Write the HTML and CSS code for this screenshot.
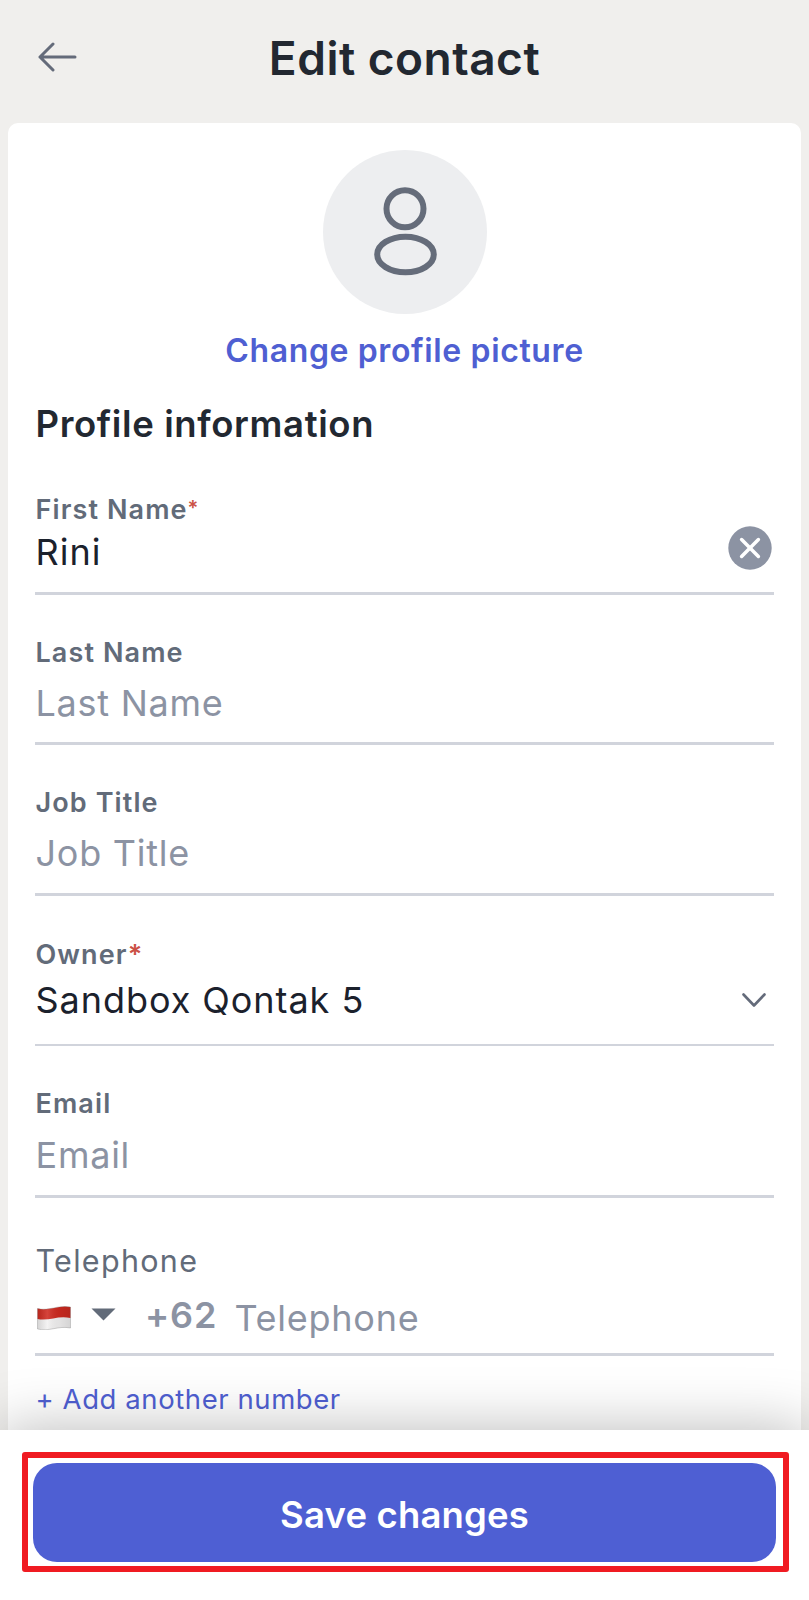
FILE: index.html
```html
<!DOCTYPE html>
<html lang="en">
<head>
<meta charset="utf-8">
<title>Edit contact</title>
<link rel="stylesheet" href="styles.css">
</head>
<body>
<div class="screen">
  <header class="topbar">
    <svg class="back" width="40" height="32" viewBox="0 0 40 32"><path d="M37 16H2M15 3L2 16l13 13"/></svg>
    <h1 class="title">Edit contact</h1>
  </header>
  <main class="card">
    <div class="avatar">
      <svg width="164" height="164" viewBox="0 0 164 164"><circle cx="82" cy="58.700" r="18.500"/><ellipse cx="82.500" cy="104.500" rx="28.300" ry="17.800"/></svg>
    </div>
    <a class="change"><span>Change profile picture</span></a>
    <h2 class="section"><span>Profile information</span></h2>

    <div class="field first">
      <div class="label"><span>First Name</span><span class="req small">*</span></div>
      <div class="value"><span>Rini</span></div>
      <svg class="clear" width="44" height="44" viewBox="0 0 44 44"><circle cx="22" cy="22" r="21.700"/><path d="M13.600 13.600l16.800 16.800M30.400 13.600L13.600 30.400"/></svg>
    </div>
    <div class="field last">
      <div class="label"><span>Last Name</span></div>
      <div class="value hint"><span>Last Name</span></div>
    </div>
    <div class="field job">
      <div class="label"><span>Job Title</span></div>
      <div class="value hint"><span>Job Title</span></div>
    </div>
    <div class="field owner">
      <div class="label"><span>Owner</span><span class="req">*</span></div>
      <div class="value"><span>Sandbox Qontak 5</span>
        <svg class="chevron" width="26" height="16" viewBox="0 0 26 16"><path d="M2.500 2.500L13 13.500 23.500 2.500"/></svg>
      </div>
    </div>
    <div class="field email">
      <div class="label"><span>Email</span></div>
      <div class="value hint"><span>Email</span></div>
    </div>
    <div class="field phone">
      <div class="label plain"><span>Telephone</span></div>
      <div class="value hint">
        <svg class="flag" width="34" height="24" viewBox="0 0 34 24">
          <defs><linearGradient id="wave"><stop offset="0" stop-color="#000" stop-opacity=".12"/><stop offset=".3" stop-color="#fff" stop-opacity=".12"/><stop offset=".65" stop-color="#000" stop-opacity=".06"/><stop offset="1" stop-color="#000" stop-opacity=".12"/></linearGradient></defs>
          <path fill="#f2f1f1" d="M.5 2.500C12 5.500 21-1.500 33.500 1v21C21 19.500 12 26 .5 23z"/>
          <path fill="#cf2a20" d="M.5 2.500C12 5.500 21-1.500 33.500 1v11C21 9 12 15.500.5 13z"/>
          <path fill="url(#wave)" stroke="#777" stroke-opacity=".4" stroke-width=".8" d="M.5 2.500C12 5.500 21-1.500 33.500 1v21C21 19.500 12 26 .5 23z"/>
        </svg>
        <svg class="caret" width="25" height="13" viewBox="0 0 25 13"><path d="M.5.5h24L12.500 12.500z"/></svg>
        <span class="code">+62</span>
        <span class="number">Telephone</span>
      </div>
    </div>
    <a class="add"><span>+ Add another number</span></a>
  </main>
  <footer class="footer">
    <div class="highlight">
      <button class="save"><span>Save changes</span></button>
    </div>
  </footer>
</div>
</body>
</html>
```
FILE: styles.css
```css
* { box-sizing: border-box; }
body { margin: 0; font-family: Inter, "Liberation Sans", sans-serif; background: #f0efed; }
.screen { height: 1600px; display: flex; flex-direction: column; overflow: hidden; }
.topbar { height: 123px; flex: none; position: relative; padding-top: 28px; }
.back { position: absolute; left: 38px; top: 41px; fill: none; stroke: #646b7a; stroke-width: 3; stroke-linecap: round; stroke-linejoin: round; }
.title { margin: 0; font-size: 46px; line-height: 60px; font-weight: 580; letter-spacing: .5px; text-align: center; color: #222831; }
.card { height: 1307px; flex: none; margin: 0 8px; padding: 27px 27px 0; background: #fff; border-radius: 10px 10px 0 0; display: flex; flex-direction: column; }
.avatar { width: 164px; height: 164px; border-radius: 50%; background: #edeef0; align-self: center; }
.avatar svg { display: block; fill: none; stroke: #656c7a; stroke-width: 6; }
.change { margin-top: 17px; font-size: 32px; line-height: 40px; font-weight: 560; letter-spacing: .62px; color: #4f5fd2; text-align: center; }
.section { margin: 31px 0 0; padding-left: .5px; font-size: 36.500px; line-height: 44px; font-weight: 580; letter-spacing: .62px; color: #222831; }
.field { position: relative; margin-top: 40px; border-bottom: 3px solid #d1d4dc; }
.label { padding-left: .5px; font-size: 27px; line-height: 34px; font-weight: 570; letter-spacing: 1.100px; color: #626b79; display: flex; }
.label span { position: relative; top: 1px; }
.label.plain { font-size: 30.500px; line-height: 38px; font-weight: 400; letter-spacing: 1.300px; }
.label.plain span { top: 0; }
.req { color: #cb5146; }
.req.small { font-size: 20px; line-height: 30px; }
.value { display: flex; align-items: center; height: 40px; margin-top: 14px; margin-bottom: 20px; padding-left: .5px; font-size: 36px; line-height: 40px; letter-spacing: .75px; color: #1b212c; }
.hint { color: #8c93a3; }
.first { margin-top: 46px; }
.first .value { margin-top: 6px; letter-spacing: 1px; }
.last .value { margin-bottom: 19px; }
.owner { margin-top: 41px; border-bottom-width: 2px; }
.owner .value { margin-top: 9px; margin-bottom: 24px; letter-spacing: .95px; }
.email .value { margin-top: 15px; }
.phone { margin-top: 44px; }
.phone .value { margin-top: 18px; margin-bottom: 15px; }
.clear { position: absolute; right: 2.500px; top: 33.500px; fill: #8c93a3; }
.clear path { stroke: #fff; stroke-width: 3.500; stroke-linecap: round; }
.chevron { margin-left: auto; margin-right: 7px; fill: none; stroke: #646b7a; stroke-width: 2.600; stroke-linecap: round; stroke-linejoin: round; }
.flag { margin-left: 1.500px; }
.caret { margin-left: 20px; margin-top: -7px; fill: #626b79; }
.code { margin-left: 29px; margin-top: -6px; font-weight: 570; letter-spacing: .9px; }
.number { margin-left: 17px; }
.add { margin-top: 26px; padding-left: .5px; font-size: 27.500px; line-height: 34px; letter-spacing: .58px; color: #4f5fd2; }
.footer { flex: 1; position: relative; background: #fff; padding: 22px 20px 0 22px; box-shadow: 0 0 60px rgba(0,0,0,.28); }
.highlight { height: 120px; border: 6px solid #f01b22; border-radius: 3px; padding: 5px 7px 4px 5px; display: flex; }
.save { flex: 1; border: 0; padding: 5px 0 0; border-radius: 24px; background: #4e5fd3; color: #fff; font: 580 36.500px/44px Inter, "Liberation Sans", sans-serif; letter-spacing: .15px; }
```
